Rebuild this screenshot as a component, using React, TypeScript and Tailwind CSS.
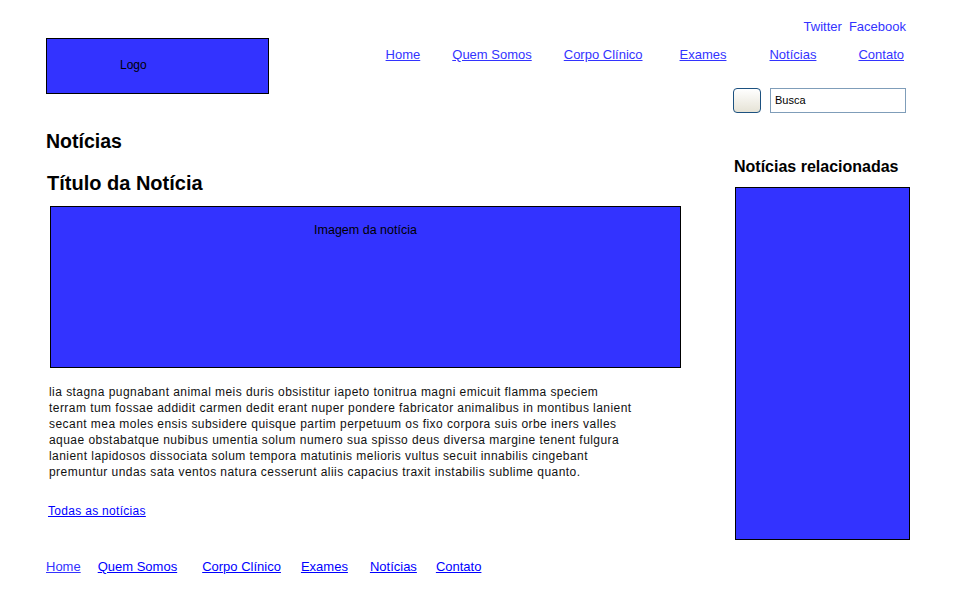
import React from "react";

const navLinks: { label: string; cls: string }[] = [
  { label: "Home", cls: "" },
  { label: "Quem Somos", cls: "ml-[32px]" },
  { label: "Corpo Clínico", cls: "ml-[32px]" },
  { label: "Exames", cls: "ml-[37px]" },
  { label: "Notícias", cls: "ml-[43px]" },
  { label: "Contato", cls: "ml-[42px]" },
];

const footerLinks: { label: string; cls: string }[] = [
  { label: "Home", cls: "text-[#3333ff]" },
  { label: "Quem Somos", cls: "ml-[17px] text-[#0000ff]" },
  { label: "Corpo Clínico", cls: "ml-[25px] text-[#0000ff]" },
  { label: "Exames", cls: "ml-[20px] text-[#0000ff]" },
  { label: "Notícias", cls: "ml-[22px] text-[#0000ff]" },
  { label: "Contato", cls: "ml-[19px] text-[#0000ff]" },
];

const lines = [
  "lia stagna pugnabant animal meis duris obsistitur iapeto tonitrua magni emicuit flamma speciem",
  "terram tum fossae addidit carmen dedit erant nuper pondere fabricator animalibus in montibus lanient",
  "secant mea moles ensis subsidere quisque partim perpetuum os fixo corpora suis orbe iners valles",
  "aquae obstabatque nubibus umentia solum numero sua spisso deus diversa margine tenent fulgura",
  "lanient lapidosos dissociata solum tempora matutinis melioris vultus secuit innabilis cingebant",
  "premuntur undas sata ventos natura cesserunt aliis capacius traxit instabilis sublime quanto.",
];

export default function App() {
  return (
    <div
      className="w-[960px] h-[600px] bg-white text-black overflow-hidden"
      style={{ fontFamily: '"Liberation Sans", Arial, sans-serif' }}
    >
      {/* Header */}
      <div className="flex justify-between items-start">
        <div className="ml-[46px] mt-[38px] w-[223px] h-[56px] border border-black bg-[#3333ff] flex items-center pl-[73px] pb-[2px] text-[12px] leading-[14px]">
          Logo
        </div>
        <div className="flex flex-col items-end pt-[19px] pr-[54px]">
          <div className="flex gap-[7px] text-[13px] leading-[15px] text-[#3333ff]">
            <span>Twitter</span>
            <span>Facebook</span>
          </div>
          <div className="flex mt-[13px] mr-[2px] text-[13px] leading-[15px]">
            {navLinks.map((l) => (
              <a key={l.label} href="#" className={`underline text-[#3333ff] ${l.cls}`}>
                {l.label}
              </a>
            ))}
          </div>
          <div className="flex mt-[26px] gap-[9px]">
            <button className="w-[28px] h-[25px] rounded-[4px] border border-[#1c5180] bg-gradient-to-b from-white to-[#e6e3d6]" />
            <div className="w-[136px] h-[25px] border border-[#7f9db9] bg-white flex items-center pl-[4px] text-[11px] leading-[13px]">
              Busca
            </div>
          </div>
        </div>
      </div>

      {/* Main */}
      <div className="flex">
        <div className="ml-[46px] w-[640px] flex flex-col items-start">
          <h1 className="mt-[17px] text-[19.5px] leading-[23px] font-bold">Notícias</h1>
          <h2 className="mt-[18px] ml-[1px] text-[20px] leading-[24px] font-bold">Título da Notícia</h2>
          <div className="mt-[11px] ml-[4px] w-[631px] h-[162px] border border-black bg-[#3333ff] flex justify-center pt-[15px] text-[12.5px] leading-[16px]">
            Imagem da notícia
          </div>
          <p className="mt-[16px] ml-[3px] text-[12px] leading-[16px] text-[#111] whitespace-nowrap tracking-[0.45px]">
            {lines.map((t, i) => (
              <React.Fragment key={i}>
                {t}
                {i < lines.length - 1 && <br />}
              </React.Fragment>
            ))}
          </p>
          <a href="#" className="mt-[23px] ml-[2px] text-[12px] leading-[16px] underline text-[#0000ff] tracking-[0.3px]">
            Todas as notícias
          </a>
        </div>
        <div className="ml-auto mr-[50px] flex flex-col">
          <h3 className="mt-[44px] -ml-[1px] text-[16px] leading-[19px] font-bold">Notícias relacionadas</h3>
          <div className="mt-[11px] w-[175px] h-[353px] border border-black bg-[#3333ff]" />
        </div>
      </div>

      {/* Footer */}
      <div className="flex ml-[46px] mt-[19px] text-[13px] leading-[15px]">
        {footerLinks.map((l) => (
          <a key={l.label} href="#" className={`underline ${l.cls}`}>
            {l.label}
          </a>
        ))}
      </div>
    </div>
  );
}
